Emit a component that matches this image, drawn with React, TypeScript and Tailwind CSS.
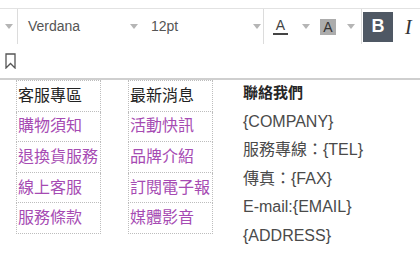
import React from 'react';

const cjk = { fontFamily: '"Liberation Sans", "Noto Sans CJK TC", sans-serif' };

const Caret = () => (
  <svg width="8" height="5" viewBox="0 0 8 5" className="shrink-0">
    <path d="M0 0h8L4 5z" fill="#b5b5b5" />
  </svg>
);

const Sep = () => <div className="w-px self-stretch bg-[#dcdcdc]" />;

const columns = [
  { title: '客服專區', links: ['購物須知', '退換貨服務', '線上客服', '服務條款'] },
  { title: '最新消息', links: ['活動快訊', '品牌介紹', '訂閱電子報', '媒體影音'] },
];

const contact = ['{COMPANY}', '服務專線：{TEL}', '傳真：{FAX}', 'E-mail:{EMAIL}', '{ADDRESS}'];

const LinkTable = ({ title, links }: { title: string; links: string[] }) => (
  <table className="w-[85px] border-collapse table-fixed">
    <tbody>
      {[title, ...links].map((t, i) => (
        <tr key={t}>
          <td
            className={`h-[30.6px] p-0 pl-[1px] border border-dotted border-[#bdbdbd] whitespace-nowrap overflow-hidden text-[16px] leading-none ${i === 0 ? 'text-[#222]' : 'text-[#a64bb3]'}`}
          >
            {t}
          </td>
        </tr>
      ))}
    </tbody>
  </table>
);

export default function App() {
  return (
    <div className="w-[420px] h-[280px] overflow-hidden bg-white" style={cjk}>
      {/* toolbar */}
      <div className="h-[80px] pt-[8px] border-b-2 border-[#cfcfcf]">
        <div className="border-t border-[#e2e2e2] h-[36px] flex items-center text-[14px] text-[#555]">
          <div className="w-[17px] flex justify-center pl-[1px]"><Caret /></div>
          <Sep />
          <div className="w-[122px] flex items-center justify-between pl-[10px] pr-[2px]">
            <span>Verdana</span>
            <Caret />
          </div>
          <div className="w-[122px] flex items-center justify-between pl-[10px] pr-[2px] ml-[1px]">
            <span>12pt</span>
            <Caret />
          </div>
          <Sep />
          <div className="flex items-center ml-[9px]">
            <span className="w-[15px] text-center text-[#444] text-[14px] leading-[14px] border-b-2 border-[#444] pb-[1px]">A</span>
            <span className="ml-[14px]"><Caret /></span>
            <span className="ml-[10px] w-[16px] h-[16px] bg-[#acacac] text-[#333] text-[14px] leading-[16px] text-center">A</span>
            <span className="ml-[11px]"><Caret /></span>
          </div>
          <div className="ml-[6px] self-stretch flex items-center">
            <Sep />
          </div>
          <div className="ml-[1px] w-[30px] h-[30px] bg-[#4f5864] text-white font-bold text-[18px] flex items-center justify-center">B</div>
          <span className="ml-[12px] text-[#333] text-[20px] italic" style={{ fontFamily: '"Liberation Serif", serif' }}>I</span>
        </div>
        <div className="h-[33px] flex items-center pl-[5px]">
          <svg width="11" height="16" viewBox="0 0 11 16">
            <path d="M1 1h9v14L5.5 10.5 1 15z" fill="none" stroke="#555" strokeWidth="1.3" strokeLinejoin="miter" />
          </svg>
        </div>
      </div>

      {/* content */}
      <div className="flex pl-[16px]">
        {columns.map((c, i) => (
          <div key={c.title} className={i === 1 ? 'ml-[27px]' : ''}>
            <LinkTable title={c.title} links={c.links} />
          </div>
        ))}
        <div className="ml-[30px] text-[16px] leading-[28.6px] text-[#4a4a4a] -mt-[1px]">
          <div className="font-bold text-[#262626] text-[15px]">聯絡我們</div>
          {contact.map((t) => (
            <div key={t} className="whitespace-nowrap">{t}</div>
          ))}
        </div>
      </div>
    </div>
  );
}
